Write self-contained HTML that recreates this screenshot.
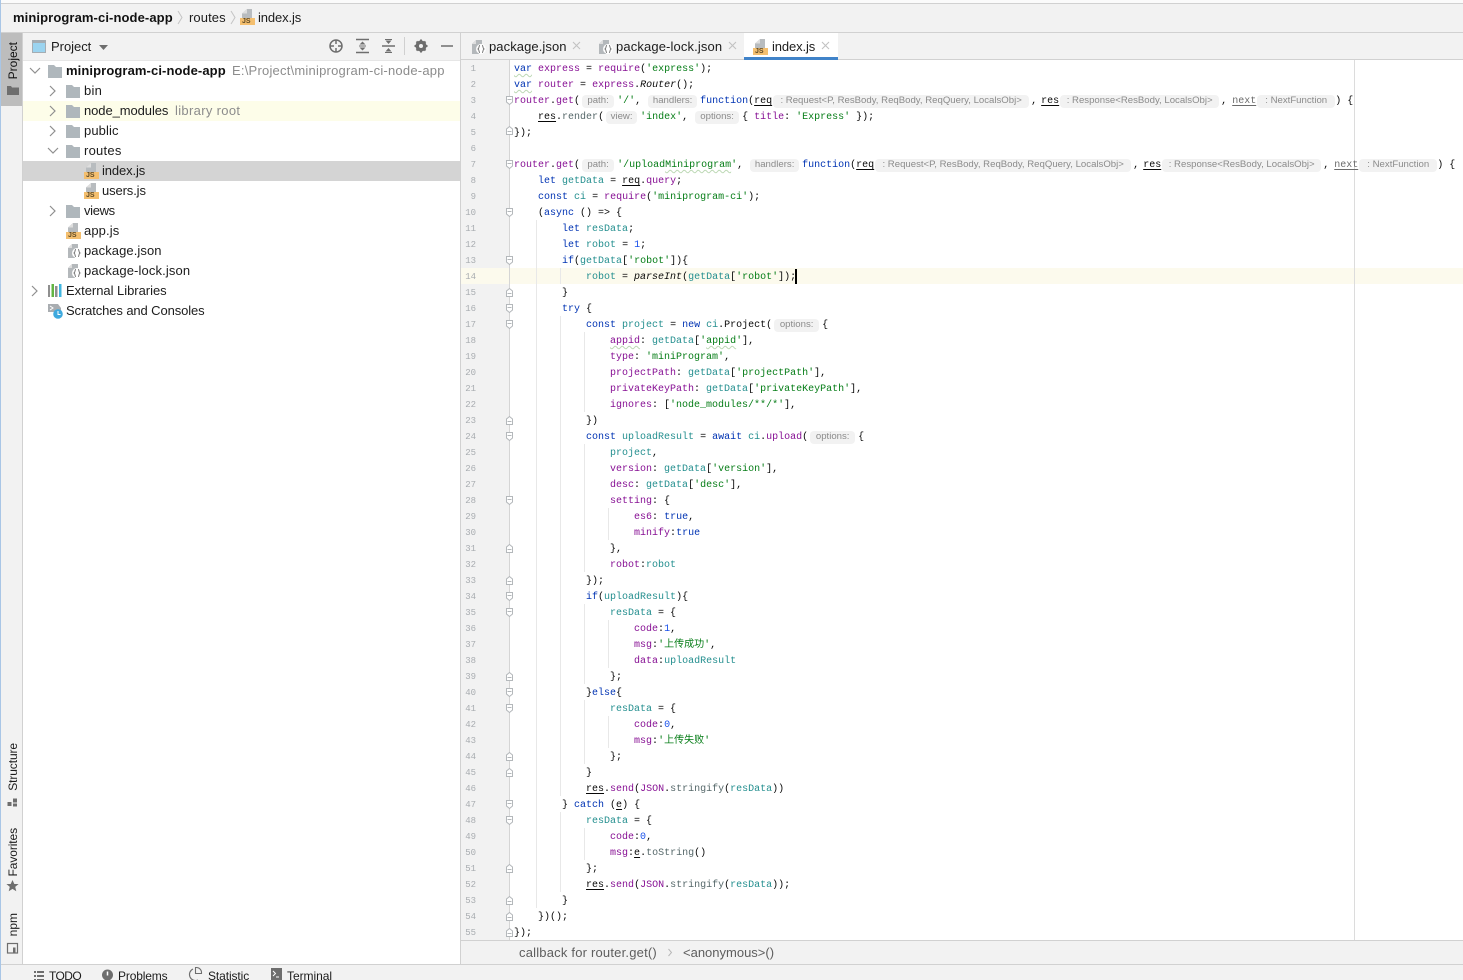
<!DOCTYPE html>
<html><head><meta charset="utf-8"><style>
html,body{margin:0;padding:0;width:1463px;height:980px;overflow:hidden;background:#fff}
body{position:relative;font-family:"Liberation Sans","Noto Sans CJK SC",sans-serif;color:#1c1c1c}
.a{position:absolute}
.bar{position:absolute;background:#f2f2f2}
.line{position:absolute;background:#d1d1d1}
.txt{position:absolute;font-size:13px;line-height:20px;white-space:nowrap;letter-spacing:.25px}
.gray{color:#8c8c8c}
.c{position:absolute;left:514px;height:16px;line-height:16px;font-family:"Liberation Mono","Noto Sans CJK SC",monospace;font-size:10px;white-space:pre;color:#080808;transform:translateY(2px)}
.c .p{color:#871094}.c .t{color:#248f8f}.c .k{color:#0033b3}.c .s{color:#067d17}.c .m{color:#56686a}.c .n{color:#1750eb}
.c u{text-decoration:underline;text-decoration-thickness:1px;text-underline-offset:2px}
.c .w{text-decoration:underline wavy #bcd8b4 1px;text-underline-offset:2px}
.c .x{color:#6b6b6b}
.c i.it{font-style:italic}
.h{display:inline-block;height:13px;line-height:13px;background:#f2f2f2;border-radius:4px;color:#8b8b8b;font:9.6px "Liberation Sans",sans-serif;text-align:center;font-style:normal;white-space:nowrap;vertical-align:0}
.ln{position:absolute;width:20px;left:456px;text-align:right;font:9px/16px "Liberation Mono",monospace;color:#a9adb1;transform:translateY(1px)}
.g{position:absolute;width:1px;background:#e8e8e8}
.js{position:absolute;width:15px;height:16px}
.js:before{content:"";position:absolute;left:2px;top:0;width:10px;height:9px;background:#b8bcbf;clip-path:polygon(50% 0,100% 0,100% 100%,0 100%,0 50%)}
.js:after{content:"";position:absolute;left:2px;top:0;width:5px;height:4.500px;background:#dedede;clip-path:polygon(100% 0,100% 100%,0 100%)}
.js span{position:absolute;left:0;top:9px;width:15px;height:7px;background:#f4bf6f;color:#5d4a28;font:bold 7px/8px "Liberation Sans",sans-serif;text-indent:2px;overflow:hidden}
.vt{position:absolute;writing-mode:vertical-rl;transform:rotate(180deg);font-size:12px;line-height:14px;left:6px;white-space:nowrap}
.st{position:absolute;font-size:12px;top:968px;line-height:16px;white-space:nowrap}
svg{position:absolute;overflow:visible}
</style></head><body>

<!-- chrome -->
<div class="a" style="left:0;top:0;width:1463px;height:3px;background:#fbfbfb"></div>
<div class="line" style="left:0;top:3px;width:1463px;height:1px"></div>
<div class="bar" style="left:0;top:4px;width:1463px;height:28px"></div>
<div class="line" style="left:0;top:32px;width:1463px;height:1px"></div>
<div class="bar" style="left:0;top:33px;width:23px;height:947px"></div>
<div class="line" style="left:22px;top:33px;width:1px;height:931px"></div>
<div class="a" style="left:1px;top:33px;width:21px;height:73px;background:#bdbdbd"></div>
<div class="bar" style="left:23px;top:33px;width:437px;height:27px"></div>
<div class="line" style="left:23px;top:60px;width:437px;height:0.5px;background:#e6e6e6"></div>
<div class="line" style="left:460px;top:33px;width:1px;height:931px"></div>
<div class="a" style="left:23px;top:101px;width:437px;height:20px;background:#fdfde9"></div>
<div class="a" style="left:23px;top:161px;width:437px;height:20px;background:#d4d4d4"></div>
<div class="bar" style="left:461px;top:33px;width:1002px;height:27px"></div>
<div class="line" style="left:461px;top:59px;width:1002px;height:1px"></div>
<div class="a" style="left:744px;top:33px;width:94px;height:24px;background:#fff"></div>
<div class="a" style="left:744px;top:57px;width:94px;height:3px;background:#4083c9"></div>
<div class="bar" style="left:461px;top:60px;width:48px;height:880px"></div>
<div class="a" style="left:461px;top:268px;width:1002px;height:16px;background:#fcfaed"></div>
<div class="line" style="left:509px;top:60px;width:1px;height:880px;background:#d5d5d5"></div>
<div class="line" style="left:1354px;top:60px;width:1px;height:880px;background:#dcdcdc"></div>
<div class="bar" style="left:461px;top:940px;width:1002px;height:24px"></div>
<div class="line" style="left:461px;top:940px;width:1002px;height:1px"></div>
<div class="line" style="left:0;top:964px;width:1463px;height:1px"></div>
<div class="bar" style="left:0;top:965px;width:1463px;height:15px"></div>
<div class="a" style="left:0;top:0;width:1px;height:980px;background:#a9c6e6"></div>

<!-- nav bar -->
<div class="txt" style="left:13px;top:8px;font-weight:bold;color:#111;letter-spacing:.1px">miniprogram-ci-node-app</div>
<svg style="left:0;top:0" width="300" height="32"><path d="M178 11l4 6.500-4 6.500M231 11l4 6.500-4 6.500" fill="none" stroke="#c4c4c4"/></svg>
<div class="txt" style="left:189px;top:8px;letter-spacing:.1px">routes</div>
<div class="js" style="left:240px;top:9px"><span>JS</span></div>
<div class="txt" style="left:258px;top:8px;letter-spacing:-.12px">index.js</div>

<!-- project tool header -->
<svg style="left:0;top:33px" width="460" height="27">
<rect x="32.500" y="7.500" width="13" height="12" fill="#9bd4f0" stroke="#a5adb3"/><rect x="32.500" y="7.500" width="13" height="2.500" fill="#a5adb3"/>
<path d="M99 12h9l-4.500 5z" fill="#6e6e6e"/>
<circle cx="336" cy="13" r="6" fill="none" stroke="#6e6e6e" stroke-width="1.500"/><path d="M336 7v4M336 15v4M330 13h4M338 13h4" stroke="#6e6e6e" stroke-width="1.500"/>
<path d="M356 6.500h13M356 19.500h13" stroke="#6e6e6e" stroke-width="1.500"/><path d="M362.500 8.500l3 3h-6zM362.500 17.500l3-3h-6z" fill="#6e6e6e"/><path d="M359 13h7" stroke="#6e6e6e"/>
<path d="M382 13h13" stroke="#6e6e6e" stroke-width="1.500"/><path d="M388.500 11l3-3.500h-6zM388.500 15l3 3.500h-6z" fill="#6e6e6e"/><path d="M385 6.500h7M385 19.500h7" stroke="#6e6e6e"/>
<path d="M404.500 4v18" stroke="#d0d0d0"/>
<circle cx="421" cy="13" r="4" fill="none" stroke="#6e6e6e" stroke-width="3"/><path d="M421 6.500v13M414.500 13h13M416.500 8.500l9 9M425.500 8.500l-9 9" stroke="#6e6e6e" stroke-width="2"/><circle cx="421" cy="13" r="2" fill="#f2f2f2"/>
<path d="M441 13h12" stroke="#6e6e6e" stroke-width="1.500"/>
</svg>
<div class="txt" style="left:51px;top:37px;letter-spacing:-.03px">Project</div>

<!-- tabs -->
<svg style="left:470px;top:38px" width="380" height="18">
<g transform="translate(2 2)"><path d="M4 0h6v6H7v8H0V4z" fill="#b4b8bb"/><path d="M0 4l4-4v4z" fill="#dedede"/><circle cx="9" cy="9" r="5" fill="#fff"/><path d="M8 5.500c-1.500 0-.5 3-2 3.500 1.500.5.500 3.500 2 3.500M10 5.500c1.500 0 .5 3 2 3.500-1.500.5-.5 3.500-2 3.500" fill="none" stroke="#6e6e6e" stroke-width=".9"/></g>
<g transform="translate(129 2)"><path d="M4 0h6v6H7v8H0V4z" fill="#b4b8bb"/><path d="M0 4l4-4v4z" fill="#dedede"/><circle cx="9" cy="9" r="5" fill="#fff"/><path d="M8 5.500c-1.500 0-.5 3-2 3.500 1.500.5.500 3.500 2 3.500M10 5.500c1.500 0 .5 3 2 3.500-1.500.5-.5 3.500-2 3.500" fill="none" stroke="#6e6e6e" stroke-width=".9"/></g>
<path d="M103 4l7 7M110 4l-7 7M259 4l7 7M266 4l-7 7M352 4l7 7M359 4l-7 7" stroke="#c2c2c2" stroke-width="1.100"/>
</svg>
<div class="txt" style="left:489px;top:37px;letter-spacing:.08px">package.json</div>
<div class="txt" style="left:616px;top:37px;letter-spacing:.13px">package-lock.json</div>
<div class="js" style="left:753px;top:39px"><span>JS</span></div>
<div class="txt" style="left:772px;top:37px;letter-spacing:-.12px">index.js</div>

<!-- tree -->
<svg style="left:23px;top:60px" width="437" height="270">
<g fill="none" stroke="#8f8f8f" stroke-width="1.200">
<path d="M7 8l5 5 5-5"/>
<path d="M27 26l5 5-5 5M27 46l5 5-5 5M27 66l5 5-5 5M27 146l5 5-5 5"/>
<path d="M25 88l5 5 5-5"/>
<path d="M9 226l5 5-5 5"/>
</g>
<g fill="#afb7bc" transform="translate(0 -1)">
<path d="M25 6h6l2 2h6v11H25z"/>
<path d="M43 26h6l2 2h6v11H43z"/>
<path d="M43 46h6l2 2h6v11H43z"/>
<path d="M43 66h6l2 2h6v11H43z"/>
<path d="M43 86h6l2 2h6v11H43z"/>
<path d="M43 146h6l2 2h6v11H43z"/>
</g>
<g transform="translate(45 184)"><path d="M4 0h6v6H7v8H0V4z" fill="#b4b8bb"/><path d="M0 4l4-4v4z" fill="#dedede"/><circle cx="9" cy="9" r="5" fill="#fff"/><path d="M8 5.500c-1.500 0-.5 3-2 3.500 1.500.5.500 3.500 2 3.500M10 5.500c1.500 0 .5 3 2 3.500-1.500.5-.5 3.500-2 3.500" fill="none" stroke="#6e6e6e" stroke-width=".9"/></g>
<g transform="translate(45 204)"><path d="M4 0h6v6H7v8H0V4z" fill="#b4b8bb"/><path d="M0 4l4-4v4z" fill="#dedede"/><circle cx="9" cy="9" r="5" fill="#fff"/><path d="M8 5.500c-1.500 0-.5 3-2 3.500 1.500.5.500 3.500 2 3.500M10 5.500c1.500 0 .5 3 2 3.500-1.500.5-.5 3.500-2 3.500" fill="none" stroke="#6e6e6e" stroke-width=".9"/></g>
<path d="M25 225h2v12h-2z" fill="#8f8f8f"/><path d="M28.500 224h2.500v13h-2.500z" fill="#62b543"/><path d="M32 226h2.500v11H32z" fill="#8f8f8f"/><path d="M36 224h2.500v13H36z" fill="#40b6e0"/>
<path d="M25 244h10l3 4v4H25z" fill="#a9adb1"/><path d="M27 246l3 2-3 2" fill="none" stroke="#fff"/>
<circle cx="35" cy="254" r="4.800" fill="#3ea9de"/><path d="M35 251v3.500h2.500" stroke="#fff" fill="none"/>
</svg>
<div class="txt" style="left:66px;top:61px;font-weight:bold;color:#111;letter-spacing:.1px">miniprogram-ci-node-app</div>
<div class="txt gray" style="left:232px;top:61px;letter-spacing:.22px">E:\Project\miniprogram-ci-node-app</div>
<div class="txt" style="left:84px;top:81px">bin</div>
<div class="txt" style="left:84px;top:101px;letter-spacing:-.08px">node_modules</div>
<div class="txt gray" style="left:175px;top:101px;letter-spacing:.33px">library root</div>
<div class="txt" style="left:84px;top:121px;letter-spacing:.1px">public</div>
<div class="txt" style="left:84px;top:141px">routes</div>
<div class="js" style="left:84px;top:163px"><span>JS</span></div>
<div class="txt" style="left:102px;top:161px;letter-spacing:-.12px">index.js</div>
<div class="js" style="left:84px;top:183px"><span>JS</span></div>
<div class="txt" style="left:102px;top:181px;letter-spacing:-.12px">users.js</div>
<div class="txt" style="left:84px;top:201px;letter-spacing:-.35px">views</div>
<div class="js" style="left:66px;top:223px"><span>JS</span></div>
<div class="txt" style="left:84px;top:221px;letter-spacing:.1px">app.js</div>
<div class="txt" style="left:84px;top:241px;letter-spacing:.08px">package.json</div>
<div class="txt" style="left:84px;top:261px;letter-spacing:.13px">package-lock.json</div>
<div class="txt" style="left:66px;top:281px;letter-spacing:-.03px">External Libraries</div>
<div class="txt" style="left:66px;top:301px;letter-spacing:-.11px">Scratches and Consoles</div>

<!-- left stripe -->
<div class="vt" style="top:42px;color:#111">Project</div>
<div class="vt" style="top:743px;letter-spacing:-.1px">Structure</div>
<div class="vt" style="top:828px;letter-spacing:-.1px">Favorites</div>
<div class="vt" style="top:913px">npm</div>
<svg style="left:0;top:0" width="23" height="964">
<path d="M7 86h4l1 1.500h7V95H7z" fill="#6e6e6e"/>
<path d="M8 801h4v4H8zM13.500 797.500h4v4h-4zM8 806.500h4v0zM13.500 802.500h4v3h-4z" fill="#6e6e6e" transform="translate(-.5 1)"/>
<path d="M12.500 880l1.800 4h4.300l-3.400 2.900 1.100 4.400-3.800-2.400-3.800 2.400 1.100-4.400-3.400-2.900h4.300z" fill="#6e6e6e"/>
<rect x="7.500" y="943.500" width="10" height="9.500" fill="none" stroke="#6e6e6e" stroke-width="1.200"/><path d="M13 947.500h2.500v5H13z" fill="#6e6e6e"/>
</svg>

<!-- status bar -->
<svg style="left:0;top:965px" width="300" height="15">
<path d="M34 6h2v2h-2zM34 10h2v2h-2zM34 14h2v2h-2zM37 6h7v2h-7zM37 10h7v2h-7zM37 14h7v2h-7z" fill="#6e6e6e"/>
<circle cx="107.500" cy="10" r="5.500" fill="#6e6e6e"/><path d="M107.500 6.500v4" stroke="#fff" stroke-width="1.500"/>
<path d="M193 4a6 6 0 1 0 5 11" fill="none" stroke="#6e6e6e" stroke-width="1.100"/><path d="M195.500 2.500h1a5 5 0 0 1 5 5v1h-6z" fill="none" stroke="#6e6e6e" stroke-width="1.100"/>
<rect x="271" y="3" width="11" height="12" fill="#6e6e6e"/><path d="M273 6l2.500 2.500L273 11M276 12h3" fill="none" stroke="#fff"/>
</svg>
<div class="st" style="left:49px;letter-spacing:-.6px">TODO</div>
<div class="st" style="left:118px;letter-spacing:-.15px">Problems</div>
<div class="st" style="left:208px;letter-spacing:-.1px">Statistic</div>
<div class="st" style="left:287px;letter-spacing:-.05px">Terminal</div>

<!-- breadcrumb -->
<div class="txt" style="left:519px;top:943px;color:#5e5e5e;letter-spacing:.2px">callback for router.get()</div>
<svg style="left:666px;top:948px" width="10" height="10"><path d="M2.500 1l3 3.500-3 3.500" fill="none" stroke="#b8b8b8"/></svg>
<div class="txt" style="left:683px;top:943px;color:#5e5e5e;letter-spacing:0">&lt;anonymous&gt;()</div>

<!-- line numbers -->
<div class="ln" style="top:60px">1</div><div class="ln" style="top:76px">2</div><div class="ln" style="top:92px">3</div><div class="ln" style="top:108px">4</div><div class="ln" style="top:124px">5</div><div class="ln" style="top:140px">6</div><div class="ln" style="top:156px">7</div><div class="ln" style="top:172px">8</div><div class="ln" style="top:188px">9</div><div class="ln" style="top:204px">10</div><div class="ln" style="top:220px">11</div><div class="ln" style="top:236px">12</div><div class="ln" style="top:252px">13</div><div class="ln" style="top:268px">14</div><div class="ln" style="top:284px">15</div><div class="ln" style="top:300px">16</div><div class="ln" style="top:316px">17</div><div class="ln" style="top:332px">18</div><div class="ln" style="top:348px">19</div><div class="ln" style="top:364px">20</div><div class="ln" style="top:380px">21</div><div class="ln" style="top:396px">22</div><div class="ln" style="top:412px">23</div><div class="ln" style="top:428px">24</div><div class="ln" style="top:444px">25</div><div class="ln" style="top:460px">26</div><div class="ln" style="top:476px">27</div><div class="ln" style="top:492px">28</div><div class="ln" style="top:508px">29</div><div class="ln" style="top:524px">30</div><div class="ln" style="top:540px">31</div><div class="ln" style="top:556px">32</div><div class="ln" style="top:572px">33</div><div class="ln" style="top:588px">34</div><div class="ln" style="top:604px">35</div><div class="ln" style="top:620px">36</div><div class="ln" style="top:636px">37</div><div class="ln" style="top:652px">38</div><div class="ln" style="top:668px">39</div><div class="ln" style="top:684px">40</div><div class="ln" style="top:700px">41</div><div class="ln" style="top:716px">42</div><div class="ln" style="top:732px">43</div><div class="ln" style="top:748px">44</div><div class="ln" style="top:764px">45</div><div class="ln" style="top:780px">46</div><div class="ln" style="top:796px">47</div><div class="ln" style="top:812px">48</div><div class="ln" style="top:828px">49</div><div class="ln" style="top:844px">50</div><div class="ln" style="top:860px">51</div><div class="ln" style="top:876px">52</div><div class="ln" style="top:892px">53</div><div class="ln" style="top:908px">54</div><div class="ln" style="top:924px">55</div>

<!-- fold markers -->
<svg style="left:0;top:0" width="520" height="940">
<defs>
<path id="fs" d="M506.500 .5h6v5.500l-3 2.500-3-2.500zM507.500 3.500h4" fill="#fff" stroke="#b4b8bb"/>
<path id="fe" d="M506.500 8.500h6v-5.500l-3-2.500-3 2.500zM507.500 5.500h4" fill="#fff" stroke="#b4b8bb"/>
</defs>
<use href="#fs" y="96"/><use href="#fe" y="126"/><use href="#fs" y="160"/><use href="#fs" y="208"/><use href="#fs" y="256"/><use href="#fe" y="288"/><use href="#fs" y="304"/><use href="#fs" y="320"/><use href="#fe" y="416"/><use href="#fs" y="432"/><use href="#fs" y="496"/><use href="#fe" y="544"/><use href="#fe" y="576"/><use href="#fs" y="592"/><use href="#fs" y="608"/><use href="#fe" y="672"/><use href="#fs" y="688"/><use href="#fs" y="704"/><use href="#fe" y="752"/><use href="#fe" y="768"/><use href="#fs" y="800"/><use href="#fs" y="816"/><use href="#fe" y="864"/><use href="#fe" y="896"/><use href="#fe" y="912"/><use href="#fe" y="928"/>
</svg>

<!-- indent guides -->
<div class="g" style="left:536px;top:220px;height:688px"></div>
<div class="g" style="left:560px;top:268px;height:16px"></div>
<div class="g" style="left:560px;top:316px;height:480px"></div>
<div class="g" style="left:560px;top:812px;height:80px"></div>
<div class="g" style="left:584px;top:332px;height:80px"></div>
<div class="g" style="left:584px;top:444px;height:128px"></div>
<div class="g" style="left:584px;top:604px;height:80px"></div>
<div class="g" style="left:584px;top:700px;height:64px"></div>
<div class="g" style="left:584px;top:828px;height:32px"></div>
<div class="g" style="left:608px;top:508px;height:32px"></div>
<div class="g" style="left:608px;top:620px;height:48px"></div>
<div class="g" style="left:608px;top:716px;height:32px"></div>

<!-- code -->
<div class="c" style="top:60px"><span class="k w">var</span> <span class="p">express</span> = <span class="p">require</span>(<span class="s">'express'</span>);</div>
<div class="c" style="top:76px"><span class="k w">var</span> <span class="p">router</span> = <span class="p">express</span>.<i class="it">Router</i>();</div>
<div class="c" style="top:92px"><span class="p">router</span>.<span class="p">get</span>(<i class="h" style="width:32px;margin:0 3px 0 2px">path:</i><span class="s">'/'</span>, <i class="h" style="width:49px;margin:0 3px 0 1px">handlers:</i><span class="k">function</span>(<u>req</u><i class="h" style="width:256px;margin:0 2px 0 1px">: Request&lt;P, ResBody, ReqBody, ReqQuery, LocalsObj&gt;</i>,<u style="margin-left:4px">res</u><i class="h" style="width:159px;margin:0 2px 0 1px">: Response&lt;ResBody, LocalsObj&gt;</i>,<u class="x" style="margin-left:5px">next</u><i class="h" style="width:78px;margin:0 0 0 1px">: NextFunction</i>) {</div>
<div class="c" style="top:108px">    <u>res</u>.<span class="m">render</span>(<i class="h" style="width:31px;margin:0 3px 0 2px">view:</i><span class="s">'index'</span>, <i class="h" style="width:44px;margin:0 3px 0 1px">options:</i>{ <span class="p">title</span>: <span class="s">'Express'</span> });</div>
<div class="c" style="top:124px">});</div>
<div class="c" style="top:156px"><span class="p">router</span>.<span class="p">get</span>(<i class="h" style="width:32px;margin:0 3px 0 2px">path:</i><span class="s">'/upload<span class="w">Miniprogram</span>'</span>, <i class="h" style="width:49px;margin:0 3px 0 1px">handlers:</i><span class="k">function</span>(<u>req</u><i class="h" style="width:256px;margin:0 2px 0 1px">: Request&lt;P, ResBody, ReqBody, ReqQuery, LocalsObj&gt;</i>,<u style="margin-left:4px">res</u><i class="h" style="width:159px;margin:0 2px 0 1px">: Response&lt;ResBody, LocalsObj&gt;</i>,<u class="x" style="margin-left:5px">next</u><i class="h" style="width:78px;margin:0 0 0 1px">: NextFunction</i>) {</div>
<div class="c" style="top:172px">    <span class="k">let</span> <span class="t">getData</span> = <u>req</u>.<span class="p">query</span>;</div>
<div class="c" style="top:188px">    <span class="k">const</span> <span class="t">ci</span> = <span class="p">require</span>(<span class="s">'miniprogram-ci'</span>);</div>
<div class="c" style="top:204px">    (<span class="k">async</span> () =&gt; {</div>
<div class="c" style="top:220px">        <span class="k">let</span> <span class="t">resData</span>;</div>
<div class="c" style="top:236px">        <span class="k">let</span> <span class="t">robot</span> = <span class="n">1</span>;</div>
<div class="c" style="top:252px">        <span class="k">if</span>(<span class="t">getData</span>[<span class="s">'robot'</span>]){</div>
<div class="c" style="top:268px">            <span class="t">robot</span> = <i class="it">parseInt</i>(<span class="t">getData</span>[<span class="s">'robot'</span>]);</div>
<div class="a" style="left:795px;top:269px;width:2px;height:15px;background:#000"></div>
<div class="c" style="top:284px">        }</div>
<div class="c" style="top:300px">        <span class="k">try</span> {</div>
<div class="c" style="top:316px">            <span class="k">const</span> <span class="t">project</span> = <span class="k">new</span> <span class="t">ci</span>.Project(<i class="h" style="width:45px;margin:0 3px 0 2px">options:</i>{</div>
<div class="c" style="top:332px">                <span class="p w">appid</span>: <span class="t">getData</span>[<span class="s">'<span class="w">appid</span>'</span>],</div>
<div class="c" style="top:348px">                <span class="p">type</span>: <span class="s">'miniProgram'</span>,</div>
<div class="c" style="top:364px">                <span class="p">projectPath</span>: <span class="t">getData</span>[<span class="s">'projectPath'</span>],</div>
<div class="c" style="top:380px">                <span class="p">privateKeyPath</span>: <span class="t">getData</span>[<span class="s">'privateKeyPath'</span>],</div>
<div class="c" style="top:396px">                <span class="p">ignores</span>: [<span class="s">'node_modules/**/*'</span>],</div>
<div class="c" style="top:412px">            })</div>
<div class="c" style="top:428px">            <span class="k">const</span> <span class="t">uploadResult</span> = <span class="k">await</span> <span class="t">ci</span>.<span class="p">upload</span>(<i class="h" style="width:45px;margin:0 3px 0 2px">options:</i>{</div>
<div class="c" style="top:444px">                <span class="t">project</span>,</div>
<div class="c" style="top:460px">                <span class="p">version</span>: <span class="t">getData</span>[<span class="s">'version'</span>],</div>
<div class="c" style="top:476px">                <span class="p">desc</span>: <span class="t">getData</span>[<span class="s">'desc'</span>],</div>
<div class="c" style="top:492px">                <span class="p">setting</span>: {</div>
<div class="c" style="top:508px">                    <span class="p">es6</span>: <span class="k">true</span>,</div>
<div class="c" style="top:524px">                    <span class="p">minify</span>:<span class="k">true</span></div>
<div class="c" style="top:540px">                },</div>
<div class="c" style="top:556px">                <span class="p">robot</span>:<span class="t">robot</span></div>
<div class="c" style="top:572px">            });</div>
<div class="c" style="top:588px">            <span class="k">if</span>(<span class="t">uploadResult</span>){</div>
<div class="c" style="top:604px">                <span class="t">resData</span> = {</div>
<div class="c" style="top:620px">                    <span class="p">code</span>:<span class="n">1</span>,</div>
<div class="c" style="top:636px">                    <span class="p">msg</span>:<span class="s">'上传成功'</span>,</div>
<div class="c" style="top:652px">                    <span class="p">data</span>:<span class="t">uploadResult</span></div>
<div class="c" style="top:668px">                };</div>
<div class="c" style="top:684px">            }<span class="k">else</span>{</div>
<div class="c" style="top:700px">                <span class="t">resData</span> = {</div>
<div class="c" style="top:716px">                    <span class="p">code</span>:<span class="n">0</span>,</div>
<div class="c" style="top:732px">                    <span class="p">msg</span>:<span class="s">'上传失败'</span></div>
<div class="c" style="top:748px">                };</div>
<div class="c" style="top:764px">            }</div>
<div class="c" style="top:780px">            <u>res</u>.<span class="p">send</span>(<span class="p">JSON</span>.<span class="m">stringify</span>(<span class="t">resData</span>))</div>
<div class="c" style="top:796px">        } <span class="k">catch</span> (<u>e</u>) {</div>
<div class="c" style="top:812px">            <span class="t">resData</span> = {</div>
<div class="c" style="top:828px">                <span class="p">code</span>:<span class="n">0</span>,</div>
<div class="c" style="top:844px">                <span class="p">msg</span>:<u>e</u>.<span class="m">toString</span>()</div>
<div class="c" style="top:860px">            };</div>
<div class="c" style="top:876px">            <u>res</u>.<span class="p">send</span>(<span class="p">JSON</span>.<span class="m">stringify</span>(<span class="t">resData</span>));</div>
<div class="c" style="top:892px">        }</div>
<div class="c" style="top:908px">    })();</div>
<div class="c" style="top:924px">});</div>

</body></html>
